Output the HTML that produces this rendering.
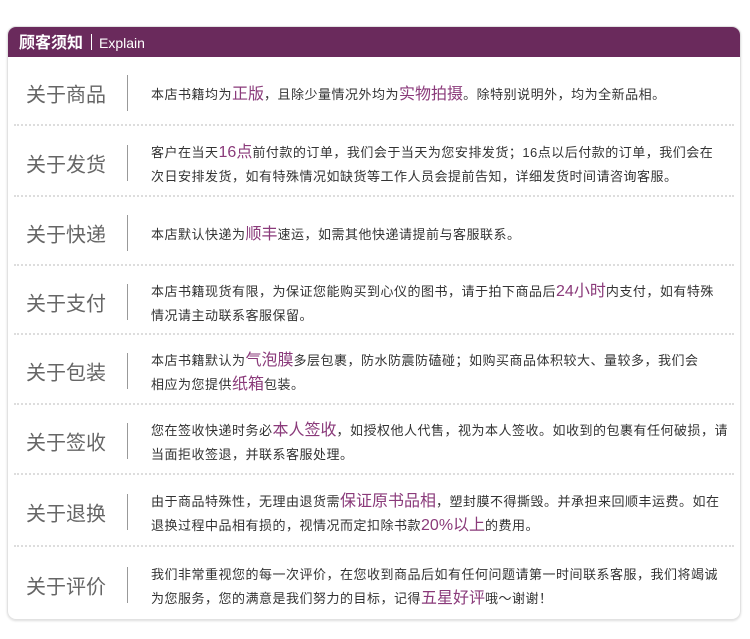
<!DOCTYPE html>
<html><head><meta charset="utf-8"><style>
body{margin:0;background:#fff;width:750px;height:639px;overflow:hidden;font-family:"Liberation Sans","Noto Sans CJK SC",sans-serif;}
.box{position:absolute;left:7px;top:26px;width:732px;height:592px;border:1px solid #e2e2e2;border-radius:9px;overflow:hidden;box-shadow:0 1px 2px #ddd;}
.hd{height:30px;background:#6a2a5c;color:#fff;font-size:16px;line-height:32px;padding-left:11px;}
.hd b{font-weight:bold;}
.hd i{display:inline-block;width:1px;height:16px;background:#fff;vertical-align:-2px;margin:0 7px 0 8px;}
.hd span{font-size:14px;}
.row{position:relative;border-bottom:2px dotted #ddd;margin:0 6px;}
.row:last-child{border-bottom:none}
.lb{position:absolute;left:12px;top:50%;margin-top:2px;transform:translateY(-50%);font-size:20px;color:#666;}
.vl{position:absolute;left:113px;top:50%;margin-top:-16px;height:36px;width:1px;background:#999;}
.tx{position:absolute;left:137px;top:50%;margin-top:4px;transform:translateY(-50%);font-size:13px;letter-spacing:0.5px;white-space:nowrap;color:#333;line-height:24px;}
.h{color:#8a3a7a;font-size:16px;letter-spacing:0;}
</style></head><body>
<div class="box">
<div class="hd"><b>顾客须知</b><i></i><span>Explain</span></div>
<div class="row" style="height:67px"><div class="lb">关于商品</div><div class="vl"></div><div class="tx">本店书籍均为<span class="h">正版</span>，且除少量情况外均为<span class="h">实物拍摄</span>。除特别说明外，均为全新品相。</div></div>
<div class="row" style="height:69px"><div class="lb">关于发货</div><div class="vl"></div><div class="tx">客户在当天<span class="h">16点</span>前付款的订单，我们会于当天为您安排发货；16点以后付款的订单，我们会在<br>次日安排发货，如有特殊情况如缺货等工作人员会提前告知，详细发货时间请咨询客服。</div></div>
<div class="row" style="height:67px"><div class="lb">关于快递</div><div class="vl"></div><div class="tx">本店默认快递为<span class="h">顺丰</span>速运，如需其他快递请提前与客服联系。</div></div>
<div class="row" style="height:67px"><div class="lb">关于支付</div><div class="vl"></div><div class="tx">本店书籍现货有限，为保证您能购买到心仪的图书，请于拍下商品后<span class="h">24小时</span>内支付，如有特殊<br>情况请主动联系客服保留。</div></div>
<div class="row" style="height:68px"><div class="lb">关于包装</div><div class="vl"></div><div class="tx">本店书籍默认为<span class="h">气泡膜</span>多层包裹，防水防震防磕碰；如购买商品体积较大、量较多，我们会<br>相应为您提供<span class="h">纸箱</span>包装。</div></div>
<div class="row" style="height:68px"><div class="lb">关于签收</div><div class="vl"></div><div class="tx">您在签收快递时务必<span class="h">本人签收</span>，如授权他人代售，视为本人签收。如收到的包裹有任何破损，请<br>当面拒收签退，并联系客服处理。</div></div>
<div class="row" style="height:70px"><div class="lb">关于退换</div><div class="vl"></div><div class="tx">由于商品特殊性，无理由退货需<span class="h">保证原书品相</span>，塑封膜不得撕毁。并承担来回顺丰运费。如在<br>退换过程中品相有损的，视情况而定扣除书款<span class="h">20%以上</span>的费用。</div></div>
<div class="row" style="height:72px"><div class="lb">关于评价</div><div class="vl"></div><div class="tx">我们非常重视您的每一次评价，在您收到商品后如有任何问题请第一时间联系客服，我们将竭诚<br>为您服务，您的满意是我们努力的目标，记得<span class="h">五星好评</span>哦～谢谢！</div></div>
</div>
</body></html>
